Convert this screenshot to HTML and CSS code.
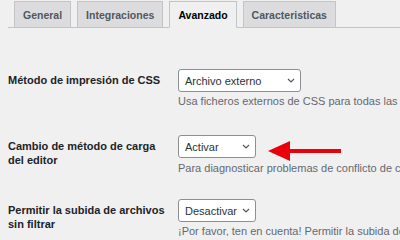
FILE: index.html
```html
<!DOCTYPE html>
<html lang="es">
<head>
<meta charset="utf-8">
<link rel="stylesheet" href="styles.css">
</head>
<body>
<div class="wrap">
  <nav class="tabs">
    <a class="tab">General</a>
    <a class="tab">Integraciones</a>
    <a class="tab active">Avanzado</a>
    <a class="tab">Caracteristicas</a>
  </nav>
  <div class="form">
    <div class="row r1">
      <div class="label">Método de impresión de CSS</div>
      <div class="field">
        <div class="select wide"><span>Archivo externo</span><svg class="chev" width="8" height="5" viewBox="0 0 8 5"><path d="M1 1l3 3 3-3" fill="none" stroke="#50575e" stroke-width="1.2"/></svg></div>
        <p class="desc">Usa ficheros externos de CSS para todas las</p>
      </div>
    </div>
    <div class="row r2">
      <div class="label">Cambio de método de carga del editor</div>
      <div class="field">
        <div class="select"><span>Activar</span><svg class="chev" width="8" height="5" viewBox="0 0 8 5"><path d="M1 1l3 3 3-3" fill="none" stroke="#50575e" stroke-width="1.2"/></svg></div>
        <p class="desc">Para diagnosticar problemas de conflicto de c</p>
        <svg class="arrow" width="76" height="22" viewBox="0 0 76 22"><path d="M0 11 L22 1 L22 9 L73 9 L73 13 L22 13 L22 21 Z" fill="#e8000b"/></svg>
      </div>
    </div>
    <div class="row r3">
      <div class="label">Permitir la subida de archivos sin filtrar</div>
      <div class="field">
        <div class="select"><span>Desactivar</span><svg class="chev" width="8" height="5" viewBox="0 0 8 5"><path d="M1 1l3 3 3-3" fill="none" stroke="#50575e" stroke-width="1.2"/></svg></div>
        <p class="desc">¡Por favor, ten en cuenta! Permitir la subida de</p>
      </div>
    </div>
  </div>
</div>
</body>
</html>
```

FILE: styles.css
```css
html, body {
  margin: 0;
  padding: 0;
  background: #f0f0f1;
  overflow: hidden;
}
body {
  width: 400px;
  height: 236px;
  font-family: "Liberation Sans", Arial, sans-serif;
  color: #1d2327;
}
.wrap {
  padding-left: 8px;
}
.tabs {
  display: flex;
  gap: 6px;
  padding: 1px 0 0 6px;
  border-bottom: 1px solid #c3c4c7;
  height: 26px;
}
.tab {
  display: flex;
  align-items: center;
  height: 25px;
  padding: 0 8px;
  margin-bottom: -1px;
  border: 1px solid #c3c4c7;
  background: #dcdcde;
  color: #50575e;
  font-size: 10.5px;
  font-weight: bold;
  white-space: nowrap;
}
.tab.active {
  background: #f0f0f1;
  color: #000;
  border-bottom-color: #f0f0f1;
}
.form {
  padding-top: 41px;
}
.row {
  display: flex;
}
.r1 { padding-bottom: 27px; }
.r2 { padding-bottom: 24px; }
.label {
  width: 160px;
  padding: 4px 10px 0 0;
  font-size: 11px;
  font-weight: bold;
  line-height: 14px;
}
.field {
  position: relative;
  flex: 1;
  min-width: 0;
}
.select {
  box-sizing: border-box;
  width: 78px;
  height: 23px;
  display: flex;
  align-items: center;
  justify-content: space-between;
  padding: 0 5px 0 6px;
  background: #fff;
  border: 1px solid #8c8f94;
  border-radius: 3px;
  font-size: 11px;
  color: #2c3338;
}
.select.wide {
  width: 123px;
}
.chev {
  display: block;
}
.desc {
  margin: 2px 0 0;
  font-size: 11px;
  line-height: 14px;
  color: #646970;
  white-space: nowrap;
}
.r2 .desc { margin-top: 3px; }
.arrow {
  position: absolute;
  left: 90px;
  top: 5px;
}
```
